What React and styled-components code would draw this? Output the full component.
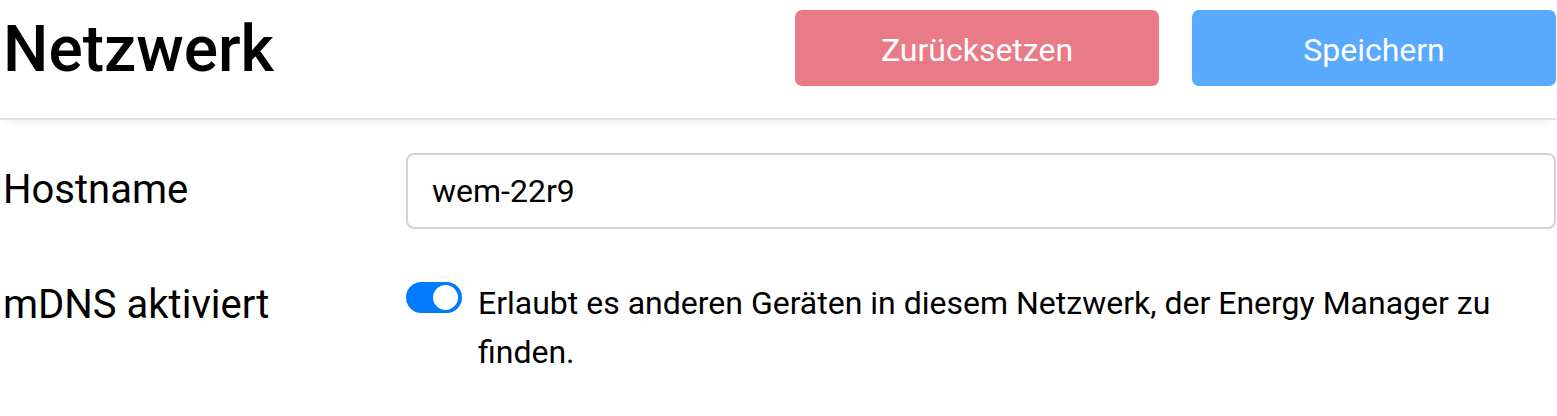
import React from "react";
import styled, { createGlobalStyle } from "styled-components";

const Global = createGlobalStyle`
  html, body { margin: 0; padding: 0; background: #fff; }
  body { font-family: Roboto, "Liberation Sans", sans-serif; color: #212529; }
  * { box-sizing: border-box; }
`;

const Page = styled.div`
  width: 1557px;
  padding: 0 1px 0 0;
`;

const Header = styled.header`
  display: flex;
  align-items: center;
  justify-content: space-between;
  padding: 10px 0 32px 3px;
  border-bottom: 2px solid #dde1e6;
  box-shadow: 0 8px 10px -6px rgba(0, 0, 0, 0.07);
  position: relative;
`;

const Title = styled.h2`
  margin: 0;
  padding-top: 4px;
  font-size: 64px;
  font-weight: 500;
  line-height: 72px;
  color: #000;
`;

const Actions = styled.div`
  display: flex;
  gap: 33px;
`;

const Button = styled.button`
  width: 364px;
  height: 76px;
  border: none;
  border-radius: 7px;
  padding: 3px 0 0 0;
  font-family: inherit;
  font-size: 32px;
  font-weight: 400;
  color: #fff;
  background: ${(p) => (p.$variant === "danger" ? "#e87b86" : "#59a9ff")};
  cursor: default;
`;

const Form = styled.div`
  display: flex;
  flex-direction: column;
  gap: 50px;
  padding-top: 33px;
`;

const Row = styled.div`
  display: grid;
  grid-template-columns: 406px 1fr;
  align-items: start;
`;

const Label = styled.label`
  font-size: 40px;
  line-height: 48px;
  color: #000;
  margin-top: ${(p) => p.$offset}px;
  padding-left: 3px;
`;

const Input = styled.input`
  width: 100%;
  height: 76px;
  border: 2px solid #ced4da;
  border-radius: 8px;
  padding: 0 24px;
  font-family: inherit;
  font-size: 32px;
  color: #000;
  outline: none;
  background: #fff;
`;

const SwitchLine = styled.div`
  display: flex;
  align-items: flex-start;
  gap: 16px;
`;

const Switch = styled.span`
  flex: none;
  position: relative;
  width: 56px;
  height: 31px;
  margin-top: 3px;
  border-radius: 16px;
  background: #007bff;
`;

const Knob = styled.span`
  position: absolute;
  top: 3px;
  right: 4px;
  width: 25px;
  height: 25px;
  border-radius: 50%;
  background: #fff;
`;

const Description = styled.p`
  margin: 0;
  font-size: 32px;
  line-height: 49px;
  color: #000;
  max-width: 1050px;
`;

export default function App() {
  return (
    <>
      <Global />
      <Page>
        <Header>
          <Title>Netzwerk</Title>
          <Actions>
            <Button $variant="danger">Zurücksetzen</Button>
            <Button $variant="primary">Speichern</Button>
          </Actions>
        </Header>
        <Form>
          <Row>
            <Label $offset={13}>Hostname</Label>
            <Input defaultValue="wem-22r9" readOnly />
          </Row>
          <Row>
            <Label $offset={2}>mDNS aktiviert</Label>
            <SwitchLine>
              <Switch>
                <Knob />
              </Switch>
              <Description>
                Erlaubt es anderen Geräten in diesem Netzwerk, der Energy Manager zu finden.
              </Description>
            </SwitchLine>
          </Row>
        </Form>
      </Page>
    </>
  );
}
